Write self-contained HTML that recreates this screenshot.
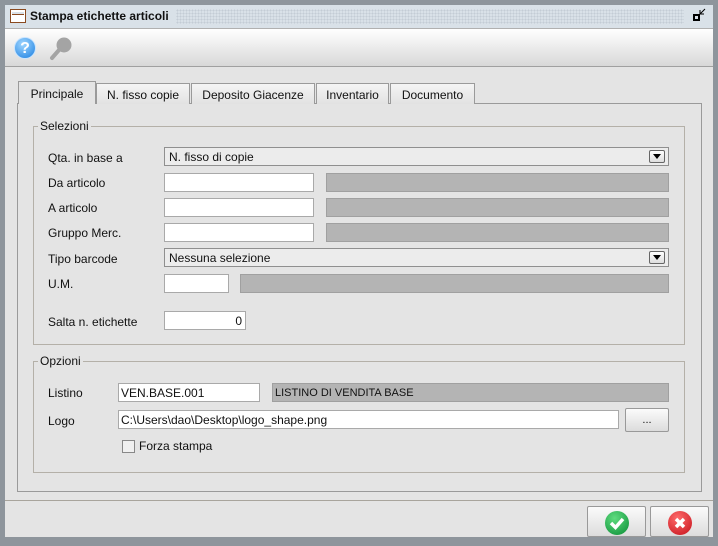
<!DOCTYPE html>
<html><head><style>
*{box-sizing:border-box}
body{margin:0;width:718px;height:546px;background:#8e959c;font-family:"Liberation Sans",sans-serif;font-size:12px;color:#111;position:relative;overflow:hidden}
.a{position:absolute}
.in{position:absolute;background:#fff;border:1px solid #a9a9a9;height:19px;padding:2px 3px 0;font-size:12px}
.gr{position:absolute;background:#b4b4b4;border:1px solid #a0a0a0;height:19px;font-size:11px;padding:3px 3px 0}
.cb{position:absolute;background:#ececec;border:1px solid #8f8f8f;height:19px;padding:2px 4px 0}
.cb .ar{position:absolute;right:3px;top:2px;width:16px;height:13px;border:1px solid #666;border-radius:2px;background:linear-gradient(#fff,#ddd)}
.cb .ar:after{content:"";position:absolute;left:3px;top:3px;border-left:4px solid transparent;border-right:4px solid transparent;border-top:5px solid #000}
.lb{position:absolute;font-size:12px}
.tab{position:absolute;top:83px;height:21px;border:1px solid #9a9a9a;border-bottom:none;background:linear-gradient(#f4f4f4,#e2e2e2);text-align:center;padding-top:4px;font-size:12px}
.grp{position:absolute;border:1px solid #b4b0a8}
.grp span{position:absolute;left:4px;top:-8px;background:#e4e4e4;padding:0 2px}
.btn{position:absolute;border:1px solid #999;border-radius:2px;background:linear-gradient(#fbfbfb,#dcdcdc)}
</style></head><body>
<div class="a" style="left:5px;top:5px;width:708px;height:532px;background:#e4e4e4"></div>
<div class="a" style="left:5px;top:5px;width:708px;height:23px;background:#d9e1e8"></div>
<div class="a" style="left:176px;top:9px;width:508px;height:15px;background-image:radial-gradient(#c3ccd5 40%,transparent 45%);background-size:3px 3px"></div>
<div class="a" style="left:10px;top:9px;width:16px;height:14px;border:1px solid #8a4a20;background:#fff"><div style="height:3px;border-bottom:1px solid #8a4a20;margin:2px 1px 0;background:#d9e1e8"></div></div>
<div class="a" style="left:30px;top:9px;font-weight:bold;font-size:12px">Stampa etichette articoli</div>
<svg class="a" style="left:692px;top:7px" width="16" height="16"><rect x="2" y="8" width="5" height="5" fill="none" stroke="#000" stroke-width="2"/><path d="M8 7 L13 2 M8 7 h4 M8 7 v-4" stroke="#000" fill="none"/></svg>
<div class="a" style="left:5px;top:28px;width:708px;height:39px;background:linear-gradient(#fff,#d8d8d8);border-top:1px solid #b0b0b0;border-bottom:1px solid #a0a0a0"></div>
<div class="a" style="left:14px;top:37px;width:22px;height:22px;border-radius:50%;background:radial-gradient(circle at 40% 30%,#9fd6ff,#1a7ee0);border:1px solid #c8e4ff;color:#fff;font-weight:bold;font-size:16px;text-align:center;line-height:21px">?</div>
<svg class="a" style="left:48px;top:35px" width="26" height="26"><circle cx="16" cy="10" r="7.5" fill="#a4a4a4"/><line x1="11" y1="15" x2="4" y2="23" stroke="#a4a4a4" stroke-width="4" stroke-linecap="round"/></svg>
<div class="a" style="left:17px;top:103px;width:685px;height:389px;border:1px solid #9a9a9a"></div>
<div class="tab" style="left:18px;top:81px;width:78px;height:23px;background:#e4e4e4;border-bottom:none;z-index:2;padding-top:5px">Principale</div>
<div class="tab" style="left:96px;width:94px">N. fisso copie</div>
<div class="tab" style="left:191px;width:124px">Deposito Giacenze</div>
<div class="tab" style="left:316px;width:73px">Inventario</div>
<div class="tab" style="left:390px;width:85px">Documento</div>
<div class="grp" style="left:33px;top:126px;width:652px;height:219px"><span>Selezioni</span></div>
<div class="lb" style="left:48px;top:151px">Qta. in base a</div>
<div class="cb" style="left:164px;top:147px;width:505px">N. fisso di copie<div class="ar"></div></div>
<div class="lb" style="left:48px;top:176px">Da articolo</div>
<div class="in" style="left:164px;top:173px;width:150px"></div><div class="gr" style="left:326px;top:173px;width:343px"></div>
<div class="lb" style="left:48px;top:201px">A articolo</div>
<div class="in" style="left:164px;top:198px;width:150px"></div><div class="gr" style="left:326px;top:198px;width:343px"></div>
<div class="lb" style="left:48px;top:226px">Gruppo Merc.</div>
<div class="in" style="left:164px;top:223px;width:150px"></div><div class="gr" style="left:326px;top:223px;width:343px"></div>
<div class="lb" style="left:48px;top:252px">Tipo barcode</div>
<div class="cb" style="left:164px;top:248px;width:505px">Nessuna selezione<div class="ar"></div></div>
<div class="lb" style="left:48px;top:277px">U.M.</div>
<div class="in" style="left:164px;top:274px;width:65px"></div><div class="gr" style="left:240px;top:274px;width:429px"></div>
<div class="lb" style="left:48px;top:315px">Salta n. etichette</div>
<div class="in" style="left:164px;top:311px;width:82px;text-align:right">0</div>
<div class="grp" style="left:33px;top:361px;width:652px;height:112px"><span>Opzioni</span></div>
<div class="lb" style="left:48px;top:386px">Listino</div>
<div class="in" style="left:118px;top:383px;width:142px;padding-left:2px">VEN.BASE.001</div>
<div class="gr" style="left:272px;top:383px;width:397px;padding-left:2px">LISTINO DI VENDITA BASE</div>
<div class="lb" style="left:48px;top:414px">Logo</div>
<div class="in" style="left:118px;top:410px;width:501px;padding-left:2px">C:\Users\dao\Desktop\logo_shape.png</div>
<div class="btn" style="left:625px;top:408px;width:44px;height:24px;text-align:center;font-size:11px;padding-top:5px">...</div>
<div class="a" style="left:122px;top:440px;width:13px;height:13px;border:1px solid #888;background:#f0f0f0"></div>
<div class="lb" style="left:139px;top:439px">Forza stampa</div>
<div class="a" style="left:5px;top:500px;width:708px;height:1px;background:#a8a49c"></div>
<div class="btn" style="left:587px;top:506px;width:59px;height:31px"><div style="position:absolute;left:17px;top:4px;width:24px;height:24px;border-radius:50%;background:radial-gradient(circle at 40% 30%,#5fdc7f,#0a8c35)"><svg width="24" height="24"><path d="M6 12 L10.5 16.5 L18 8" stroke="#fff" stroke-width="3.5" fill="none"/></svg></div></div>
<div class="btn" style="left:650px;top:506px;width:59px;height:31px"><div style="position:absolute;left:17px;top:4px;width:24px;height:24px;border-radius:50%;background:radial-gradient(circle at 40% 30%,#ff6b6b,#c4101a)"><svg width="24" height="24"><path d="M8 8 L16 16 M16 8 L8 16" stroke="#fff" stroke-width="3.5"/></svg></div></div>
</body></html>
